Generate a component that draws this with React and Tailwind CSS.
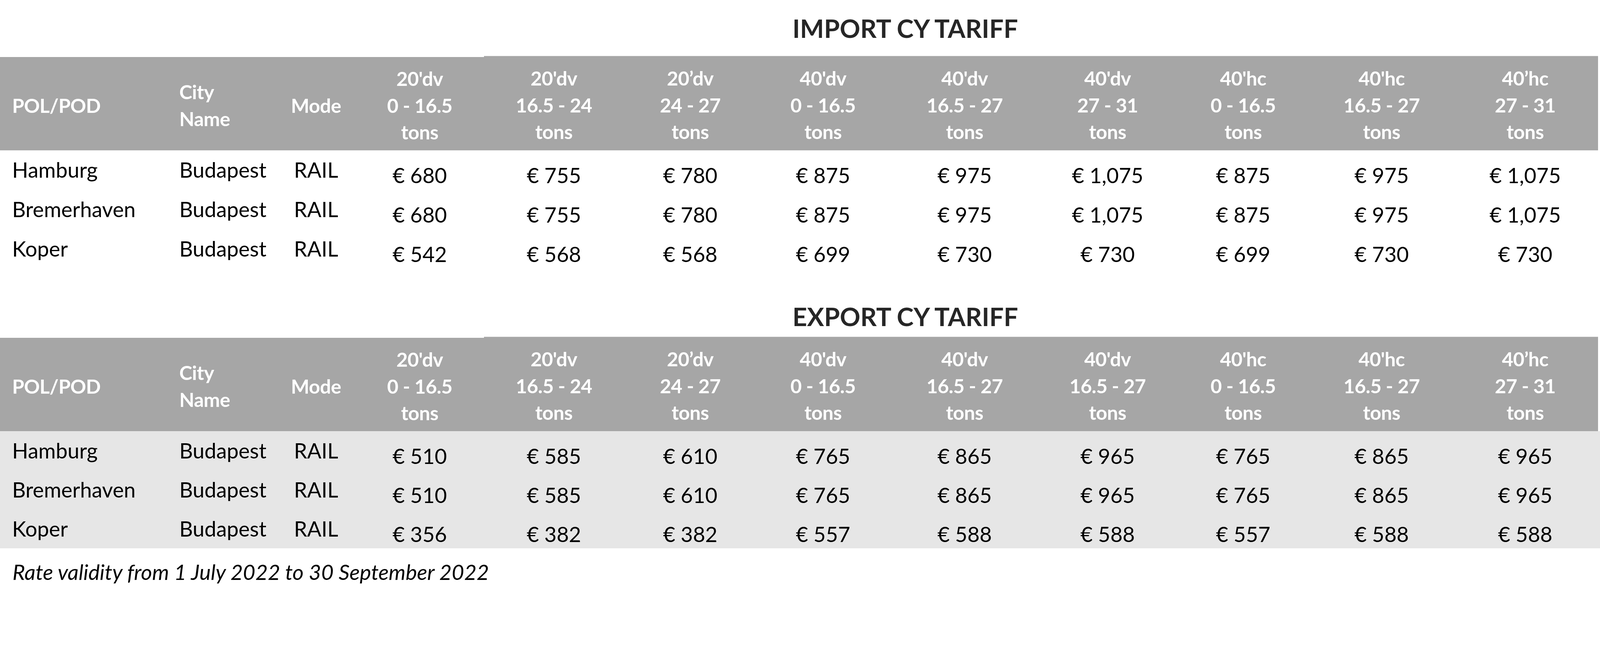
import React from "react";

const cols =
  "grid grid-cols-[428px_280px_202px_329px_358px_340px_340px_385px_347px_347px_362px_373px]";

const importHeads = [
  ["20'dv", "0 - 16.5", "tons"],
  ["20'dv", "16.5 - 24", "tons"],
  ["20’dv", "24 - 27", "tons"],
  ["40'dv", "0 - 16.5", "tons"],
  ["40'dv", "16.5 - 27", "tons"],
  ["40'dv", "27 - 31", "tons"],
  ["40'hc", "0 - 16.5", "tons"],
  ["40'hc", "16.5 - 27", "tons"],
  ["40’hc", "27 - 31", "tons"],
];

const exportHeads = [
  ["20'dv", "0 - 16.5", "tons"],
  ["20'dv", "16.5 - 24", "tons"],
  ["20’dv", "24 - 27", "tons"],
  ["40'dv", "0 - 16.5", "tons"],
  ["40'dv", "16.5 - 27", "tons"],
  ["40'dv", "16.5 - 27", "tons"],
  ["40'hc", "0 - 16.5", "tons"],
  ["40'hc", "16.5 - 27", "tons"],
  ["40’hc", "27 - 31", "tons"],
];

const importRows = [
  ["Hamburg", ["680", "755", "780", "875", "975", "1,075", "875", "975", "1,075"]],
  ["Bremerhaven", ["680", "755", "780", "875", "975", "1,075", "875", "975", "1,075"]],
  ["Koper", ["542", "568", "568", "699", "730", "730", "699", "730", "730"]],
];

const exportRows = [
  ["Hamburg", ["510", "585", "610", "765", "865", "965", "765", "865", "965"]],
  ["Bremerhaven", ["510", "585", "610", "765", "865", "965", "765", "865", "965"]],
  ["Koper", ["356", "382", "382", "557", "588", "588", "557", "588", "588"]],
];

const TariffTable = ({ heads, rows, shaded }) => {
  return (
    <>
      {/* header band */}
      <div className={`${cols} h-[242px] text-white font-bold text-[50px] leading-[68.6px] tracking-[-0.01em]`}>
        <div className="bg-[#a6a6a6] border-t-[3px] border-white flex items-center pl-[31px] pt-[9px]">
          POL/POD
        </div>
        <div className="bg-[#a6a6a6] border-t-[3px] border-white flex flex-col justify-center pl-[31px] pt-[9px]">
          <span>City</span>
          <span>Name</span>
        </div>
        <div className="bg-[#a6a6a6] border-t-[3px] border-white flex items-center justify-center pt-[9px]">
          Mode
        </div>
        {heads.map((h, i) => (
          <div
            key={i}
            className={`bg-[#a6a6a6] flex flex-col items-center justify-center pt-[9px] ${
              i === 0 ? "border-t-[3px] border-white" : "border-t border-[#cfcfcf]"
            }`}
          >
            {h.map((line, j) => (
              <span key={j}>{line}</span>
            ))}
          </div>
        ))}
      </div>

      {/* rows */}
      <div className={shaded ? "bg-[#e6e6e6]" : "bg-white"}>
        {rows.map(([port, prices], r) => (
          <div
            key={r}
            className={`${cols} ${shaded ? "h-[100px]" : "h-[101px]"} text-black text-[54px] leading-none`}
          >
            <div className="pl-[31px] pt-[23px]">{port}</div>
            <div className="pl-[31px] pt-[23px]">Budapest</div>
            <div className="text-center pt-[23px]">RAIL</div>
            {prices.map((p, i) => (
              <div key={i} className="text-center pt-[37px]">
                € {p}
              </div>
            ))}
          </div>
        ))}
      </div>
    </>
  );
};

export default function App() {
  return (
    <div className="w-full min-h-screen bg-white font-['Lato',sans-serif]">
      <div className="h-[143px] pt-[40px] pl-[539px] text-center text-[65px] leading-none font-bold text-[#262626]">
        IMPORT CY TARIFF
      </div>
      <TariffTable heads={importHeads} rows={importRows} shaded={false} />

      <div className="h-[174px] pt-[90px] pl-[539px] text-center text-[65px] leading-none font-bold text-[#262626]">
        EXPORT CY TARIFF
      </div>
      <TariffTable heads={exportHeads} rows={exportRows} shaded={true} />

      <div className="pt-[33px] pl-[32px] text-[55px] leading-none italic text-black">
        Rate validity from 1 July 2022 to 30 September 2022
      </div>
    </div>
  );
}
